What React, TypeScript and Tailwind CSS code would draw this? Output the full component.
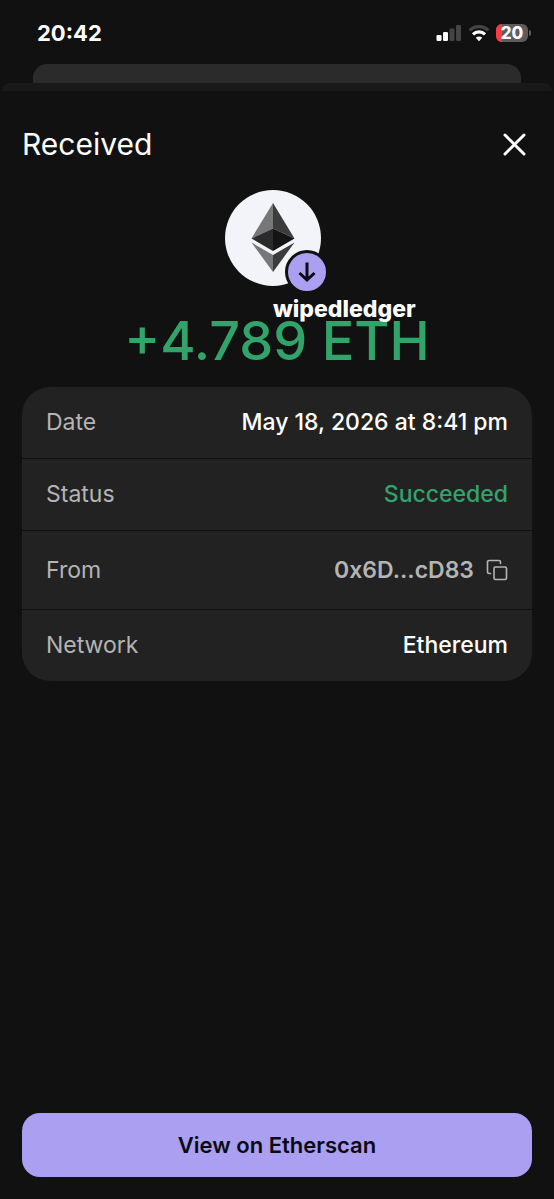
import type { PropsWithChildren } from 'react'
import clsx from 'clsx'

function SignalIcon() {
  return (
    <svg width="26" height="18" viewBox="0 0 26 18" aria-hidden="true">
      <rect x="0.5" y="11" width="5" height="6" rx="1.3" fill="#fff" />
      <rect x="7" y="8" width="5" height="9" rx="1.3" fill="#fff" />
      <rect x="13.5" y="4.5" width="5" height="12.5" rx="1.3" fill="#454545" />
      <rect x="20" y="1" width="5" height="16" rx="1.3" fill="#454545" />
    </svg>
  )
}

function WifiIcon() {
  return (
    <svg width="22" height="18" viewBox="0 0 22 18" fill="none" aria-hidden="true">
      <path d="M1.6 6.4a13.4 13.4 0 0 1 18.800 0" stroke="#454545" strokeWidth="3.2" />
      <path d="M5 10.300a8.600 8.600 0 0 1 12 0" stroke="#fff" strokeWidth="3.2" />
      <path d="M11 17.200l-3.200-3.400a4.600 4.600 0 0 1 6.400 0z" fill="#fff" />
    </svg>
  )
}

function Battery({ level = 20 }: { level?: number }) {
  return (
    <div className="flex items-center gap-px">
      <div className="relative h-[18px] w-8 overflow-hidden rounded-md bg-[#5c5c5e]">
        <span className="absolute inset-y-0 left-0 bg-[#fb3b42]" style={{ width: `${level}%` }} />
        <span className="relative block text-center text-[17px] leading-[18px] font-extrabold text-white">
          {level}
        </span>
      </div>
      <span className="h-1.5 w-0.5 rounded-r-full bg-[#5c5c5e]" />
    </div>
  )
}

function StatusBar() {
  return (
    <div className="flex h-16 items-center justify-between pt-0.5 pr-[23px] pl-[37px]">
      <span className="text-[22px] leading-8 font-bold">20:42</span>
      <div className="flex items-center gap-1.5">
        <SignalIcon />
        <WifiIcon />
        <Battery />
      </div>
    </div>
  )
}

function EthLogo() {
  return (
    <svg width="44" height="70" viewBox="0 0 44 70" aria-hidden="true">
      <path d="M22 0L0.5 35.5 22 25.5z" fill="#777779" />
      <path d="M22 0l21.5 35.5L22 25.5z" fill="#3c3c3d" />
      <path d="M22 25.5L0.5 35.5 22 48z" fill="#2b2b2c" />
      <path d="M22 25.5l21.5 10L22 48z" fill="#141414" />
      <path d="M0.5 39.5L22 69V52z" fill="#777779" />
      <path d="M43.5 39.5L22 69V52z" fill="#3c3c3d" />
    </svg>
  )
}

function TokenBadge() {
  return (
    <div className="relative flex size-24 items-center justify-center rounded-full bg-[#f3f4f9]">
      <EthLogo />
      <span className="absolute -right-2 -bottom-2 flex size-11 items-center justify-center rounded-full border-3 border-[#111] bg-[#aa9ff0]">
        <svg
          width="20"
          height="22"
          viewBox="0 0 20 22"
          fill="none"
          stroke="#0b0b12"
          strokeWidth="3"
          aria-hidden="true"
        >
          <path d="M10 1.500v17.500M2.500 12l7.500 7 7.500-7" />
        </svg>
      </span>
    </div>
  )
}

type DetailRowProps = {
  label: string
  tall?: boolean
}

function DetailRow({ label, tall = false, children }: PropsWithChildren<DetailRowProps>) {
  return (
    <div
      className={clsx(
        'flex items-center justify-between gap-4 border-b border-[#111] px-6 last:border-b-0',
        tall ? 'h-[79px]' : 'h-[72px] pb-0.5 last:h-[71px]',
      )}
    >
      <dt className="text-[#b4b4b4]">{label}</dt>
      <dd className="font-medium">{children}</dd>
    </div>
  )
}

export default function App() {
  return (
    <div className="flex min-h-screen flex-col bg-[#111] font-['Inter',sans-serif] text-white">
      <StatusBar />
      <div className="mx-[33px] h-[19px] rounded-t-[14px] bg-[#2b2b2b]" />
      <div className="mx-0.5 h-2 rounded-t-lg bg-[#191919]" />

      <main className="flex flex-1 flex-col px-[22px] pt-[31px] pb-[22px]">
        <header className="flex items-center justify-between">
          <h1 className="text-[30px] leading-11">Received</h1>
          <button type="button" aria-label="Close" className="p-1.5">
            <svg
              width="23"
              height="23"
              viewBox="0 0 23 23"
              stroke="#fff"
              strokeWidth="3"
              strokeLinecap="round"
              aria-hidden="true"
            >
              <path d="M2 2l19 19M21 2L2 21" />
            </svg>
          </button>
        </header>

        <section className="mt-6 flex flex-col items-center">
          <div className="relative mr-2">
            <TokenBadge />
            <span className="absolute top-[103px] left-1/2 text-[23px] leading-8 font-extrabold">
              wipedledger
            </span>
          </div>
          <p className="mt-6 text-[54px] leading-[62px] font-medium text-[#31a46c]">+4.789 ETH</p>
        </section>

        <dl className="mt-[15px] overflow-hidden rounded-[28px] bg-[#222] text-[23px] leading-8">
          <DetailRow label="Date">May 18, 2026 at 8:41 pm</DetailRow>
          <DetailRow label="Status">
            <span className="text-[#31a46c]">Succeeded</span>
          </DetailRow>
          <DetailRow label="From" tall>
            <button type="button" className="flex items-center gap-3 font-semibold text-[#b4b4b4]">
              0x6D...cD83
              <svg
                width="22"
                height="22"
                viewBox="0 0 22 22"
                fill="none"
                stroke="currentColor"
                strokeWidth="1.6"
                strokeLinecap="round"
                aria-hidden="true"
              >
                <rect x="8" y="8" width="12.5" height="12.5" rx="1.5" />
                <path d="M4.500 14.500H3A1.500 1.500 0 0 1 1.500 13V3A1.500 1.500 0 0 1 3 1.500h10A1.500 1.500 0 0 1 14.500 3v1.500" />
              </svg>
            </button>
          </DetailRow>
          <DetailRow label="Network">Ethereum</DetailRow>
        </dl>

        <button
          type="button"
          className="mt-auto h-16 rounded-[18px] bg-[#aa9ff0] text-[22px] leading-8 font-semibold text-[#0b0b14]"
        >
          View on Etherscan
        </button>
      </main>
    </div>
  )
}
